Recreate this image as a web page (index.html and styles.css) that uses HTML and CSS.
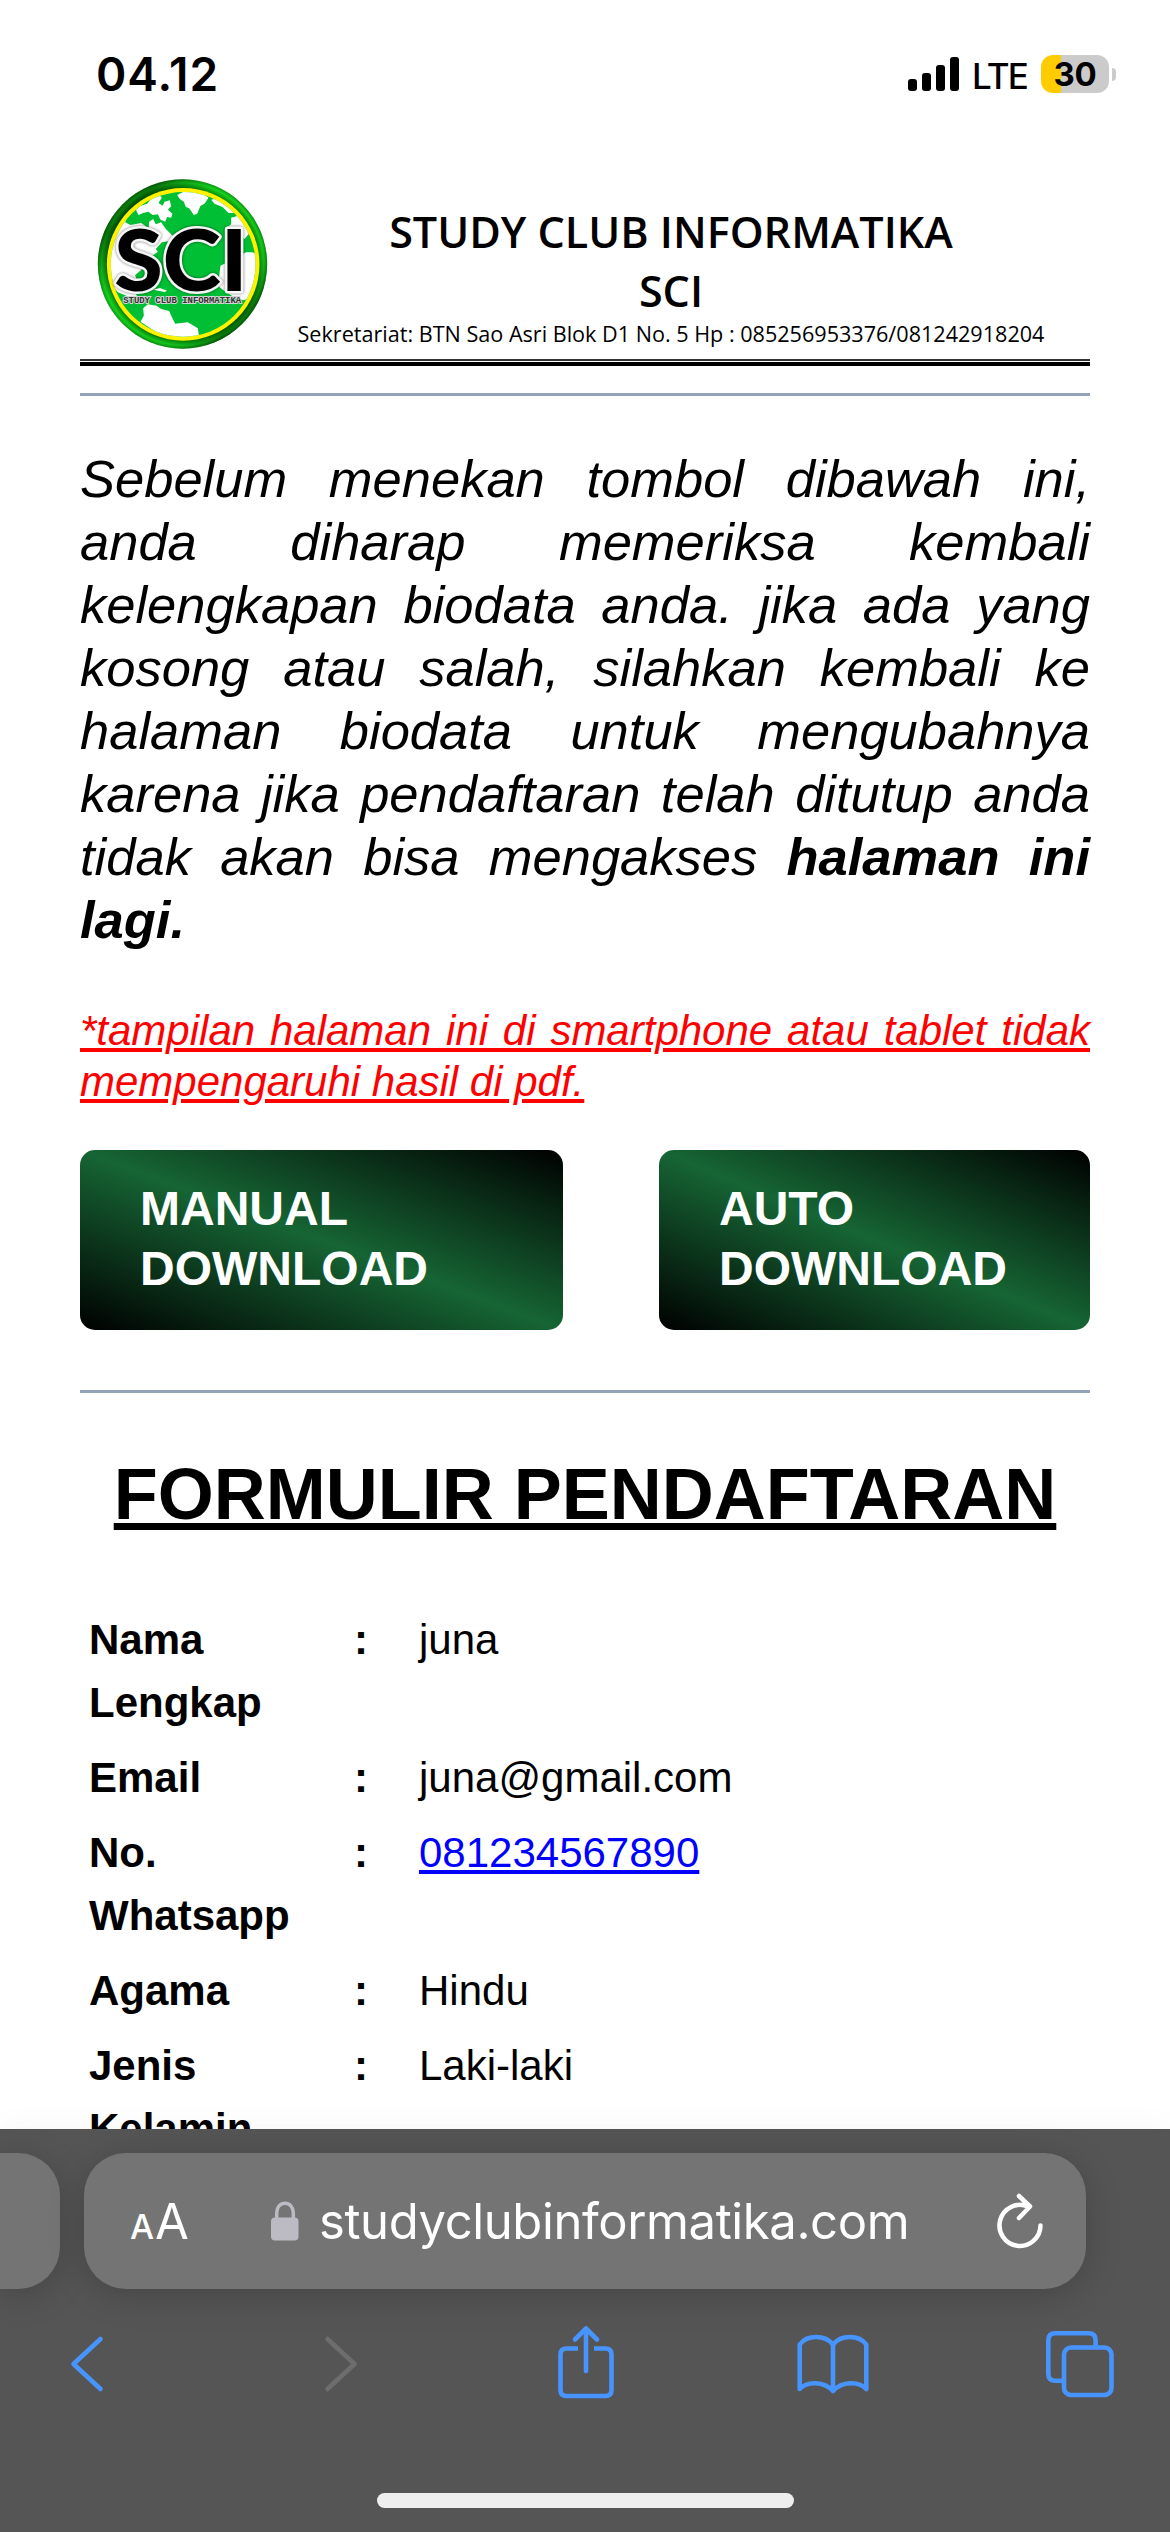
FILE: index.html
```html
<!DOCTYPE html>
<html lang="id">
<head>
<meta charset="utf-8">
<title>Study Club Informatika</title>
<link rel="stylesheet" href="styles.css">
</head>
<body>
<header class="status">
  <span class="clock">04.12</span>
  <div class="indicators">
    <svg class="signal" viewBox="0 0 52 34"><rect y="22" width="9" height="12" rx="3"/><rect x="14" y="16" width="9" height="18" rx="3"/><rect x="28" y="8" width="9" height="26" rx="3"/><rect x="42" width="9" height="34" rx="3"/></svg>
    <span class="network">LTE</span>
    <div class="battery">30</div>
    <i class="battery-tip"></i>
  </div>
</header>

<main class="page">
  <div class="letterhead">
    <svg class="logo" viewBox="50 40 512 510">
      <defs>
        <radialGradient id="rim" cx="306" cy="295" r="254" gradientUnits="userSpaceOnUse">
          <stop offset=".89" stop-color="#004a00"/><stop offset=".92" stop-color="#058a08"/><stop offset=".96" stop-color="#14c41a"/><stop offset="1" stop-color="#067a08"/>
        </radialGradient>
        <linearGradient id="shade" x1="0" y1="0" x2="1" y2="1">
          <stop offset="0" stop-color="#002800" stop-opacity=".1"/><stop offset=".17" stop-color="#002800" stop-opacity=".5"/><stop offset=".38" stop-color="#20ff30" stop-opacity=".25"/><stop offset=".65" stop-color="#20ff30" stop-opacity=".1"/><stop offset=".85" stop-color="#002800" stop-opacity=".5"/><stop offset="1" stop-color="#002800" stop-opacity=".2"/>
        </linearGradient>
        <clipPath id="globe"><circle cx="308" cy="296" r="217"/></clipPath>
      </defs>
      <circle cx="306" cy="295" r="254" fill="url(#rim)"/>
      <circle cx="306" cy="295" r="241" fill="none" stroke="url(#shade)" stroke-width="26"/>
      <circle cx="308" cy="296" r="229" fill="#fff200"/>
      <circle cx="308" cy="296" r="217" fill="#00bf35"/>
      <g clip-path="url(#globe)" fill="#fff">
        <path d="M166 132l14-12 20-6 12-14 24-14 8 10-10 16 12 8 6-12 16-4 4 18-10 10 14 12-4 12-12-2-6 14-14-6-8-16-16 2-12-10-16 4-14 6z"/>
        <path d="M290 88l20-10 50 0 24 18-12 18-12 6-10 24-10 4-14-20-10-4-6-16-12-8z"/>
        <path d="M78 240l30-62 30-36 6 6-10 22 16 8 32-6 14 10-4 16 12-4 2-26 12-8 8 16 16-6 14 20 22 22-10 14-24 4-18 20 6 8-16 12-10 16-18 22-24 20 4 14-14 4-16-8-22 2-10 14 30 14 22 2 12 22-24 2-34-14-50-60z"/>
        <path d="M180 468l10-18-2-22 14-12 26 4 14 10 24 6 8 18 10 20 38-4 30 18 4 28-40 6-70-10z"/>
        <path d="M392 102l20-4 30 18 22 26-20 0-18-18-24-10z"/>
        <path d="M440 184l12-8 0-20 16-4 14-14 16 26 14 32-20 24-18-12-30-10z"/>
        <path d="M496 260l20 0 12 6 4 42-4 40-18 50-22 6-34-14-22-14-20-16 8-60 40-20z"/>
        <path d="M218 372l20-5 22 8-8 4z"/>
      </g>
      <text class="logo-letters" x="101" y="377" textLength="400" lengthAdjust="spacingAndGlyphs">SCI</text>
      <text class="logo-caption" x="128" y="411" textLength="354" lengthAdjust="spacingAndGlyphs">STUDY CLUB INFORMATIKA</text>
    </svg>
    <div class="heading">
      <h2 class="org">STUDY CLUB INFORMATIKA<br>SCI</h2>
      <p class="address">Sekretariat: BTN Sao Asri Blok D1 No. 5 Hp : 085256953376/081242918204</p>
    </div>
  </div>
  <hr class="double-rule">
  <hr class="rule">
  <p class="notice">Sebelum menekan tombol dibawah ini, anda diharap memeriksa kembali kelengkapan biodata anda. jika ada yang kosong atau salah, silahkan kembali ke halaman biodata untuk mengubahnya karena jika pendaftaran telah ditutup anda tidak akan bisa mengakses <b>halaman ini lagi.</b></p>
  <p class="hint">*tampilan halaman ini di smartphone atau tablet tidak mempengaruhi hasil di pdf.</p>
  <div class="actions">
    <a class="button manual">MANUAL<br>DOWNLOAD</a>
    <a class="button auto">AUTO<br>DOWNLOAD</a>
  </div>
  <hr class="rule">
  <h1 class="title">FORMULIR PENDAFTARAN</h1>
  <div class="form">
    <div class="row"><b class="label">Nama Lengkap</b><b class="colon">:</b><span class="value">juna</span></div>
    <div class="row"><b class="label">Email</b><b class="colon">:</b><span class="value">juna@gmail.com</span></div>
    <div class="row"><b class="label">No. Whatsapp</b><b class="colon">:</b><a class="value" href="tel:081234567890">081234567890</a></div>
    <div class="row"><b class="label">Agama</b><b class="colon">:</b><span class="value">Hindu</span></div>
    <div class="row"><b class="label">Jenis Kelamin</b><b class="colon">:</b><span class="value">Laki-laki</span></div>
  </div>
</main>

<footer class="browser">
  <div class="tabs">
    <div class="tab previous"></div>
    <div class="tab current">
      <span class="text-size"><small class="small-a">A</small>A</span>
      <svg class="lock" viewBox="0 0 28 40"><path d="M5.700 18V11.500a8.300 9.300 0 0 1 16.600 0V18" fill="none" stroke="#bcbac2" stroke-width="3.500"/><rect y="16.500" width="27.500" height="23" rx="4" fill="#bcbac2"/></svg>
      <span class="url">studyclubinformatika.com</span>
      <svg class="reload" viewBox="0 0 46 56"><path d="M31 13.500A20.500 20.500 0 1 0 43.500 32.500M22 3l11 10.500-11 11.500" /></svg>
    </div>
  </div>
  <nav class="tools">
    <svg class="tool back" viewBox="0 0 80 80"><path d="M55.500 17L28.500 42 55.500 67"/></svg>
    <svg class="tool forward" viewBox="0 0 80 80"><path d="M25.500 17L52.500 42 25.500 67"/></svg>
    <svg class="tool share" viewBox="0 0 80 80"><path class="butt" d="M32 26.500H20.500q-6 0-6 6v35.500q0 6 6 6h39q6 0 6-6v-35.500q0-6-6-6H48"/><path d="M40 49V7M29 17.500L40 6.500l11 11"/></svg>
    <svg class="tool" viewBox="0 0 80 80"><path d="M40 22.500C32 12.500 14 12.500 6.700 22.500V67C14 59 31 59 40 69 49 59 66 59 73.300 67V22.500C66 12.500 48 12.500 40 22.500V69"/></svg>
    <svg class="tool" viewBox="0 0 80 80"><rect x="24" y="25.500" width="47.500" height="47.500" rx="7"/><path class="butt" d="M55.600 25V18.300q0-7-7-7H15.300q-7 0-7 7V51.700q0 7 7 7H24"/></svg>
  </nav>
  <div class="home-indicator"></div>
</footer>
</body>
</html>
```
FILE: styles.css
```css
* { box-sizing: border-box; }
body {
  margin: 0;
  width: 1170px;
  height: 2532px;
  overflow: hidden;
  display: flex;
  flex-direction: column;
  background: #fff;
  color: #000;
  font-family: "Liberation Sans", Arial, sans-serif;
}
h1, h2, p { margin: 0; }
hr { border: 0; margin: 0; }

.status {
  flex: none;
  height: 148px;
  padding: 0 54px 0 96px;
  display: flex;
  align-items: center;
  justify-content: space-between;
  font-family: Inter, sans-serif;
}
.clock { font-size: 46px; font-weight: 600; letter-spacing: 1px; }
.indicators { display: flex; align-items: center; }
.signal { width: 52px; height: 34px; margin-right: 12px; }
.network { width: 54px; margin-right: 15px; font-size: 35px; font-weight: 500; letter-spacing: -1.800px; margin-top: 3px; }
.battery {
  width: 68px;
  height: 38px;
  line-height: 39px;
  border-radius: 12px;
  background: linear-gradient(to right, #ffcc00 20px, #cbcbcb 20px);
  text-align: center;
  font-size: 33px;
  font-weight: 700;
  letter-spacing: -.4px;
}
.battery-tip { width: 4px; height: 13px; margin-left: 3px; border-radius: 0 5px 5px 0; background: #cbcbcb; }

.page { flex: none; height: 1981px; padding: 31px 80px 0; overflow: hidden; }
.letterhead { display: flex; height: 180px; padding-left: 17px; }
.logo { flex: none; width: 171px; height: 170px; }
.logo-letters {
  font-family: Lato, sans-serif;
  font-weight: 900;
  font-size: 256px;
  fill: #000;
  stroke: #f6f6f6;
  stroke-width: 15px;
  stroke-linejoin: round;
  paint-order: stroke;
  filter: drop-shadow(0 0 4px #0008);
}
.logo-caption {
  font-family: "Liberation Mono", monospace;
  font-weight: 700;
  font-size: 28px;
  fill: #333;
  stroke: #d4d4d4;
  stroke-width: 6px;
  paint-order: stroke;
}
.heading { flex: 1; padding: 24px 8px 0 0; margin-left: -8px; text-align: center; font-family: "Open Sans", sans-serif; }
.org { font-size: 43.100px; line-height: 58.500px; font-weight: 600; }
.address { margin-top: -1px; font-size: 21.600px; line-height: 29px; white-space: nowrap; }
.double-rule { height: 7px; border-top: 2px solid #333; border-bottom: 4px solid #000; }
.rule { height: 3px; margin-top: 27px; background: #94a3b8; }
.notice { margin-top: 51px; font-size: 52.500px; line-height: 63px; font-style: italic; text-align: justify; }
.hint {
  margin-top: 54px;
  color: #f00;
  font-size: 42px;
  line-height: 51px;
  font-style: italic;
  text-align: justify;
  text-decoration: underline;
}
.actions { display: flex; justify-content: space-between; margin-top: 43px; margin-bottom: 60px; }
.button {
  height: 180px;
  padding: 29px 60px;
  border-radius: 15px;
  background: linear-gradient(to top right, #000, #166534, #000);
  color: #fff;
  font-size: 48px;
  font-weight: 700;
  line-height: 60px;
}
.manual { width: 483px; }
.auto { width: 431px; }
.title { margin-top: 59px; text-align: center; font-size: 72px; line-height: 84px; text-decoration: underline; }
.form { margin-top: 72px; padding: 0 9px; font-size: 42px; line-height: 63px; }
.row { display: grid; grid-template-columns: 265px 65px 1fr; margin-bottom: 12px; }
.label { width: 220px; }
.value { justify-self: start; }
a.value { color: #00f; }

.browser {
  flex: none;
  height: 403px;
  padding-top: 24px;
  background: #555;
  box-shadow: 0 0 34px #0000000a;
}
.tabs { display: flex; gap: 24px; }
.tab { height: 136px; background: #747474; box-shadow: 0 6px 36px #00000030; }
.previous { width: 60px; border-radius: 0 42px 42px 0; }
.current {
  width: 1002px;
  border-radius: 42px;
  padding: 0 43px 0 46px;
  display: flex;
  align-items: center;
  color: #fff;
  font-family: Inter, sans-serif;
}
.text-size { width: 141px; margin-top: 2px; font-size: 49px; line-height: 60px; }
.small-a { margin-right: 1px; font-size: 34px; line-height: 1; font-weight: 500; }
.lock { width: 28px; height: 40px; margin-right: 20px; }
.url { flex: 1; margin-top: 2px; font-size: 49px; line-height: 60px; letter-spacing: -.4px; white-space: nowrap; }
.reload { width: 46px; height: 56px; fill: none; stroke: #fff; stroke-width: 4.500px; stroke-linecap: round; stroke-linejoin: round; }
.tools { display: flex; justify-content: space-between; padding: 33px 50px 0 45px; }
.tool { width: 80px; height: 80px; fill: none; stroke: #4794ff; stroke-width: 4.600px; stroke-linecap: round; stroke-linejoin: round; }
.butt { stroke-linecap: butt; }
.back { margin-right: 10px; }
.share { margin-left: -3px; }
.forward { stroke: #6d6d6d; }
.home-indicator { width: 417px; height: 15px; margin: 91px auto 0; border-radius: 8px; background: #eee; }
```
